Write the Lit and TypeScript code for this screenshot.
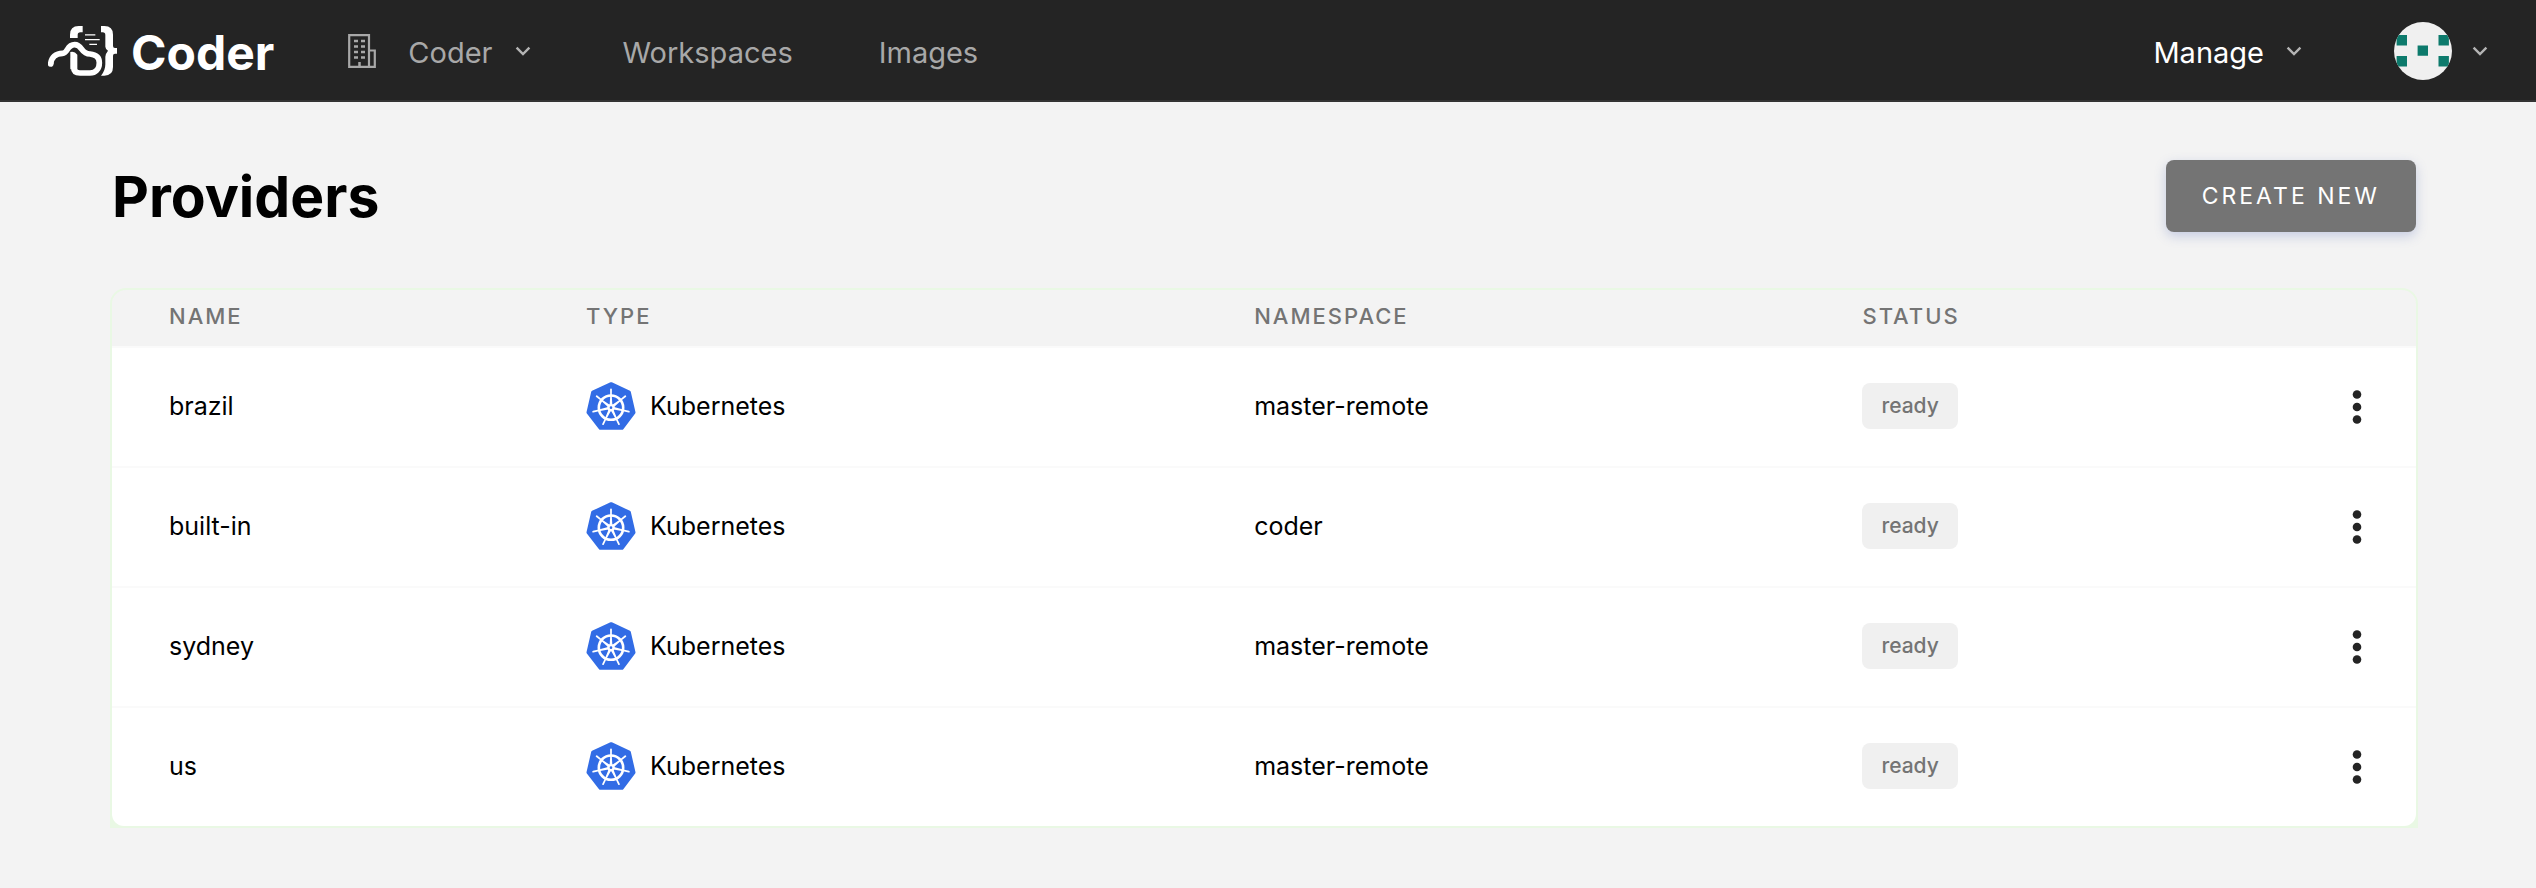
import { LitElement, html, css, svg } from "lit";
import { customElement, property } from "lit/decorators.js";

interface Provider {
  name: string;
  type: string;
  namespace: string;
  status: string;
}

const PROVIDERS: Provider[] = [
  { name: "brazil", type: "Kubernetes", namespace: "master-remote", status: "ready" },
  { name: "built-in", type: "Kubernetes", namespace: "coder", status: "ready" },
  { name: "sydney", type: "Kubernetes", namespace: "master-remote", status: "ready" },
  { name: "us", type: "Kubernetes", namespace: "master-remote", status: "ready" },
];

const chevron = html`<svg class="chevron" width="16" height="10" viewBox="0 0 16 10" aria-hidden="true">
  <path d="M1.6 1.6 8 8 14.4 1.6" fill="none" stroke="currentColor" stroke-width="2.4" />
</svg>`;

const logoMark = html`<svg width="70" height="52" viewBox="54 75 210 156" fill="#fff" aria-hidden="true">
  <path d="M158 78h-12q-26 0-26 26v10h23v-9q0-8 8-8h7z" />
  <path d="M213 78h10q26 0 26 26v34q0 6 6 6h6v17h-6q-6 0-6 6v34q0 26-26 26h-10q13-15 13-34v-23q0-8 8-18q-8-6-8-12v-35q0-8-8-8h-5z" />
  <path d="M165 104.500h31M165 119h44M178 133h23" stroke="#fff" stroke-width="4" fill="none" />
  <path d="M62 192C64 172 77 160 98 160C114 160 110 134 134 134C158 134 152 162 180 162C198 164 208 173 208 188C208 208 196 219 180 219H150Q131 219 131 201V174" fill="none" stroke="#fff" stroke-width="17" stroke-linejoin="round" />
  <circle cx="62" cy="192" r="8.500" />
  <path d="M121 156q12-4 21 8v44h-21z" />
</svg>`;

const building = html`<svg width="28" height="34" viewBox="0 0 28 34" fill="none" stroke="currentColor" aria-hidden="true">
  <path d="M1.200 1.200H21V32.800H1.200zM21 16.500h5.800V32.800H21" stroke-width="2.200" />
  <path d="M6 7h4M13 7h4M6 12.500h4M13 12.500h4M6 18h4M13 18h4M6 23.500h4M13 23.500h4" stroke-width="2.500" />
  <path d="M11.500 28v5" stroke-width="2.500" />
</svg>`;

const spokes = [0, 1, 2, 3, 4, 5, 6].map(
  (i) => svg`<path transform=${`rotate(${(i * 360) / 7} 152.5 145.5)`}
    d="M148.500 137 150 111 149.800 90q0-3 2.700-3t2.700 3l-.2 21 1.500 26z" />`
);

const kubernetes = html`<svg width="50" height="48" viewBox="77.500 67.500 150 146" aria-hidden="true">
  <path d="M153 73 208 99 222 160 186 208H120L83 160 97 99z" fill="#326ce5" stroke="#326ce5" stroke-width="10" stroke-linejoin="round" />
  <circle cx="152.500" cy="145.500" r="37" fill="none" stroke="#fff" stroke-width="8" />
  <g fill="#fff">${spokes}<circle cx="152.500" cy="145.500" r="11" /></g>
  <circle cx="152.500" cy="145.500" r="4" fill="#326ce5" />
</svg>`;

const avatar = html`<svg width="58" height="58" viewBox="0 0 58 58" aria-hidden="true">
  <clipPath id="round"><circle cx="29" cy="29" r="29" /></clipPath>
  <g clip-path="url(#round)">
    <path fill="#f0f0f0" d="M0 0h58v58H0z" />
    <path fill="#0d7a6c" d="M2.600 13H13v10.400H2.600zM44.500 13h10.400v10.400H44.500zM23.600 23.400H34v10.400H23.600zM2.600 34H13v10.400H2.600zM44.500 34h10.400v10.400H44.500z" />
  </g>
</svg>`;

const dots = html`<svg width="10" height="36" viewBox="0 0 10 36" fill="#242424" aria-hidden="true">
  <circle cx="5" cy="5.500" r="4.300" /><circle cx="5" cy="18" r="4.300" /><circle cx="5" cy="30.500" r="4.300" />
</svg>`;

@customElement("app-header")
export class AppHeader extends LitElement {
  static styles = css`
    :host {
      display: block;
      background: #242424;
      border-bottom: 2px solid #333;
    }
    .bar {
      display: flex;
      align-items: center;
      justify-content: space-between;
      height: 100px;
      padding: 2px 48px 0;
      box-sizing: border-box;
    }
    .group {
      display: flex;
      align-items: center;
    }
    .brand {
      display: flex;
      align-items: center;
      gap: 13px;
      margin-right: 74px;
      color: #fff;
      font-size: 48px;
      font-weight: 700;
      line-height: 56px;
      text-decoration: none;
    }
    .brand span,
    .item span {
      padding-top: 3px;
    }
    .links {
      gap: 86px;
    }
    .item {
      display: flex;
      align-items: center;
      padding: 0;
      border: 0;
      background: none;
      color: #a8a8a8;
      font: inherit;
      font-size: 29px;
      line-height: 40px;
      text-decoration: none;
      cursor: pointer;
    }
    .org {
      gap: 22px;
      margin-right: 6px;
    }
    .org svg:first-child {
      margin-right: 10px;
    }
    .manage {
      gap: 22px;
      color: #fff;
    }
    .user {
      gap: 20px;
    }
    .account {
      gap: 92px;
    }
    .chevron {
      color: #b4b4b4;
    }
  `;

  render() {
    return html`
      <header class="bar">
        <div class="group">
          <a class="brand" href="#">${logoMark}<span>Coder</span></a>
          <nav class="group links">
            <button class="item org" type="button">${building}<span>Coder</span>${chevron}</button>
            <a class="item" href="#workspaces"><span>Workspaces</span></a>
            <a class="item" href="#images"><span>Images</span></a>
          </nav>
        </div>
        <div class="group account">
          <button class="item manage" type="button"><span>Manage</span>${chevron}</button>
          <button class="item user" type="button" aria-label="Account">${avatar}${chevron}</button>
        </div>
      </header>
    `;
  }
}

@customElement("provider-table")
export class ProviderTable extends LitElement {
  @property({ attribute: false }) providers: Provider[] = [];

  static styles = css`
    :host {
      display: block;
      border: 2px solid #e9f8e4;
      border-radius: 16px 16px 0 0;
      background: #e9f8e4;
      overflow: hidden;
    }
    .table {
      width: 100%;
      table-layout: fixed;
      border-collapse: separate;
      border-spacing: 0;
    }
    .name {
      width: 18.1%;
    }
    .type {
      width: 29%;
    }
    .namespace {
      width: 26.4%;
    }
    .head-row {
      background: #f3f3f3;
    }
    .head {
      box-sizing: border-box;
      height: 56px;
      padding: 0 57px 4px;
      color: #747474;
      font-size: 22px;
      font-weight: 500;
      letter-spacing: 2px;
      line-height: 28px;
      text-align: left;
      text-transform: uppercase;
    }
    .cell {
      box-sizing: border-box;
      height: 120px;
      padding: 0 57px 2px;
      border-top: 2px solid #fafafa;
      background: #fff;
      color: #000;
      font-size: 25px;
      line-height: 36px;
    }
    .row:last-child .cell:first-child {
      border-bottom-left-radius: 12px;
    }
    .row:last-child .cell:last-child {
      border-bottom-right-radius: 12px;
    }
    .kind {
      display: flex;
      align-items: center;
      gap: 14px;
    }
    .badge {
      display: inline-block;
      padding: 8px 19px;
      border-radius: 8px;
      background: #f0f0f0;
      color: #747474;
      font-size: 21px;
      font-weight: 500;
      line-height: 30px;
      vertical-align: middle;
    }
    .cell.actions {
      padding-right: 54px;
      text-align: right;
    }
    .more {
      display: inline-flex;
      padding: 0;
      border: 0;
      background: none;
      vertical-align: middle;
      cursor: pointer;
    }
  `;

  render() {
    return html`
      <table class="table">
        <colgroup>
          <col class="name" />
          <col class="type" />
          <col class="namespace" />
          <col />
        </colgroup>
        <thead>
          <tr class="head-row">
            <th class="head">Name</th>
            <th class="head">Type</th>
            <th class="head">Namespace</th>
            <th class="head">Status</th>
            <th class="head" aria-label="Actions"></th>
          </tr>
        </thead>
        <tbody>
          ${this.providers.map(
            (p) => html`<tr class="row">
              <td class="cell">${p.name}</td>
              <td class="cell"><span class="kind">${kubernetes}<span>${p.type}</span></span></td>
              <td class="cell">${p.namespace}</td>
              <td class="cell"><span class="badge">${p.status}</span></td>
              <td class="cell actions">
                <button class="more" type="button" aria-label="Actions for ${p.name}">${dots}</button>
              </td>
            </tr>`
          )}
        </tbody>
      </table>
    `;
  }
}

@customElement("app-root")
export class AppRoot extends LitElement {
  static styles = css`
    :host {
      display: block;
      min-height: 100vh;
      background: #f3f3f3;
      font-family: Inter, "Liberation Sans", sans-serif;
    }
    .page {
      padding: 58px 118px 60px 110px;
    }
    .top {
      display: flex;
      align-items: center;
      justify-content: space-between;
      margin: 0 2px 56px;
    }
    .title {
      margin: 0;
      padding-top: 2px;
      color: #000;
      font-size: 57px;
      font-weight: 700;
      line-height: 70px;
    }
    .create {
      height: 72px;
      padding: 0 36px;
      border: 0;
      border-radius: 8px;
      background: #747474;
      box-shadow: 0 4px 12px rgba(80, 100, 180, 0.28);
      color: #fff;
      font: inherit;
      font-size: 23px;
      letter-spacing: 3px;
      text-transform: uppercase;
      cursor: pointer;
    }
  `;

  render() {
    return html`
      <app-header></app-header>
      <main class="page">
        <div class="top">
          <h1 class="title">Providers</h1>
          <button class="create" type="button">Create New</button>
        </div>
        <provider-table .providers=${PROVIDERS}></provider-table>
      </main>
    `;
  }
}
